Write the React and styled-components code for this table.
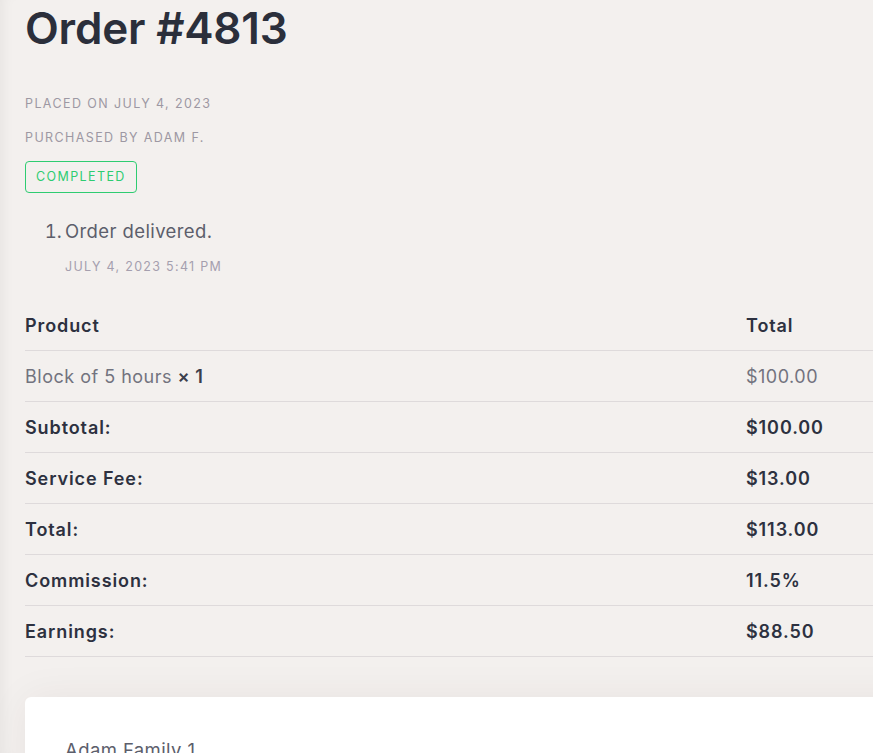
import React from 'react';
import { styled, createGlobalStyle } from 'styled-components';

const GlobalStyle = createGlobalStyle`
  html, body {
    margin: 0;
    padding: 0;
    background-color: #f3f0ee;
    overflow: hidden;
  }
  body {
    font-family: Inter, Lato, sans-serif;
    color: #2d3140;
  }
`;

const Page = styled.div`
  width: 1000px;
  height: 753px;
  padding: 0 0 0 25px;
  box-shadow: inset 12px 0 14px -10px rgba(0, 0, 0, 0.06);
`;

const Title = styled.h1`
  margin: 0;
  padding-top: 2px;
  font-size: 44px;
  line-height: 53px;
  font-weight: 600;
  color: #2b2f3b;
  letter-spacing: -0.2px;
`;

const Meta = styled.p`
  margin: ${(p) => p.$top || 0}px 0 0;
  font-size: 12.5px;
  line-height: 18px;
  letter-spacing: 1.4px;
  text-transform: uppercase;
  color: #9d98a3;
`;

const Badge = styled.span`
  display: inline-block;
  margin-top: 14px;
  padding: 0 10px;
  height: 30px;
  line-height: 30px;
  border: 1px solid #2ecc71;
  border-radius: 4px;
  font-size: 12.5px;
  letter-spacing: 1.4px;
  color: #2ecc71;
`;

const Notes = styled.ol`
  margin: 25px 0 0;
  padding-left: 40px;
`;

const Note = styled.li`
  font-size: 18.5px;
  line-height: 26px;
  letter-spacing: 0.4px;
  color: #5c5e6b;

  &::marker {
    content: counter(list-item) ".\\2009";
    letter-spacing: 0;
  }
`;

const NoteDate = styled.div`
  margin-top: 14px;
  font-size: 12.5px;
  line-height: 18px;
  letter-spacing: 1.3px;
  color: #a59fae;
`;

const Table = styled.div`
  margin-top: 24px;
  width: 960px;
`;

const Row = styled.div`
  display: grid;
  grid-template-columns: 721px 1fr;
  height: 50px;
  align-items: center;
  border-bottom: 1px solid #dedadb;
  font-size: 18px;
  letter-spacing: ${(p) => (p.$bold ? '0.9px' : '0.5px')};
  font-weight: ${(p) => (p.$bold ? 600 : 400)};
  color: ${(p) => (p.$muted ? '#72737e' : '#2d3140')};
`;

const Qty = styled.strong`
  font-weight: 600;
  color: #3b3e4c;
`;

const Card = styled.div`
  margin-top: 40px;
  width: 960px;
  height: 200px;
  background: #ffffff;
  border-radius: 6px;
  box-shadow: 0 0 40px rgba(60, 40, 30, 0.06);
  padding: 42px 40px;
  box-sizing: border-box;
`;

const CardName = styled.div`
  font-size: 18.5px;
  letter-spacing: 0.4px;
  color: #5c5e6b;
`;

const totals = [
  ['Subtotal:', '$100.00'],
  ['Service Fee:', '$13.00'],
  ['Total:', '$113.00'],
  ['Commission:', '11.5%'],
  ['Earnings:', '$88.50'],
];

export default function App() {
  return (
    <Page>
      <GlobalStyle />
      <Title>Order #4813</Title>
      <Meta $top={40}>Placed on July 4, 2023</Meta>
      <Meta $top={16}>Purchased by Adam F.</Meta>
      <Badge>COMPLETED</Badge>
      <Notes>
        <Note>
          Order delivered.
          <NoteDate>JULY 4, 2023 5:41 PM</NoteDate>
        </Note>
      </Notes>
      <Table>
        <Row $bold>
          <span>Product</span>
          <span>Total</span>
        </Row>
        <Row $muted>
          <span>
            Block of 5 hours <Qty>×&nbsp;1</Qty>
          </span>
          <span>$100.00</span>
        </Row>
        {totals.map(([label, value]) => (
          <Row $bold key={label}>
            <span>{label}</span>
            <span>{value}</span>
          </Row>
        ))}
      </Table>
      <Card>
        <CardName>Adam Family 1</CardName>
      </Card>
    </Page>
  );
}
